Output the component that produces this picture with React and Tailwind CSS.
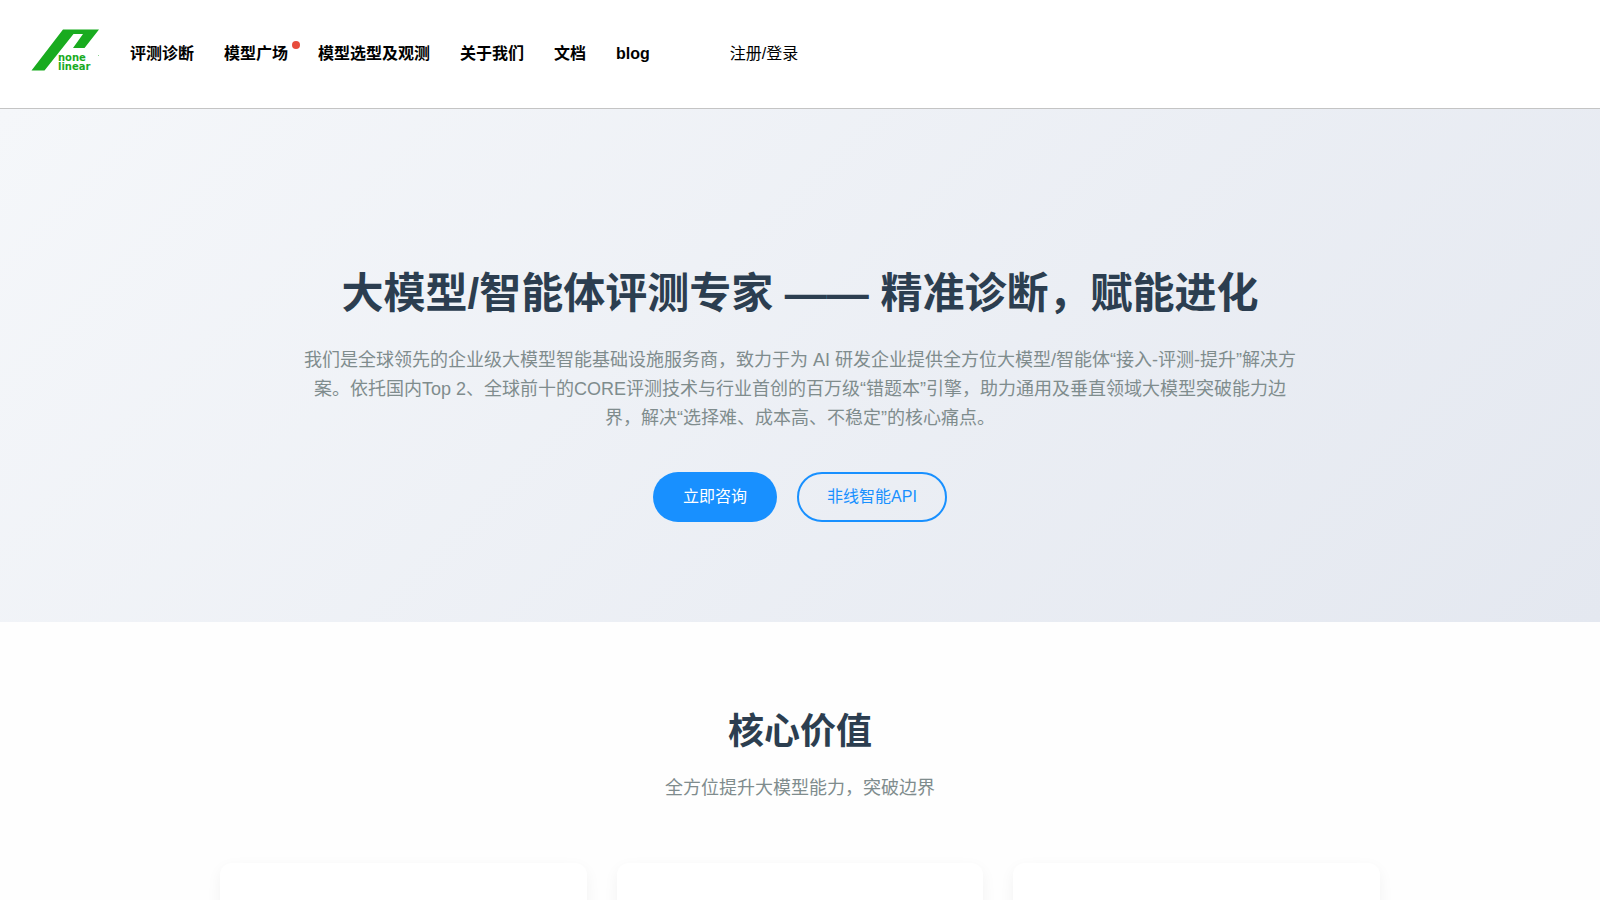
const navItems = [
  { label: '评测诊断' },
  { label: '模型广场', hot: true },
  { label: '模型选型及观测' },
  { label: '关于我们' },
  { label: '文档' },
  { label: 'blog' },
];

function Logo() {
  return (
    <svg className="h-[60px] w-[70px]" viewBox="0 0 70 60" role="img" aria-label="none linear">
      <path d="M33 9.5H69L54.5 28H43L53 14H43.5L14.5 50.5H1.5Z" fill="#19ab1f" />
      <g fill="#19ab1f" fontFamily="'DejaVu Sans', sans-serif" fontWeight="bold">
        <text x="28" y="41" fontSize="10">none</text>
        <text x="28" y="50" fontSize="10">linear</text>
      </g>
      <rect x="68" y="35" width="1" height="1" fill="#8fd492" />
    </svg>
  );
}

function Header() {
  return (
    <header className="flex h-[109px] items-center border-b border-[#c4c4c4] bg-white px-[30px] pb-2">
      <a href="#home" className="shrink-0">
        <Logo />
      </a>
      <nav className="mt-2 ml-[30px] flex items-center gap-[30px] whitespace-nowrap">
        {navItems.map((item) => (
          <a key={item.label} href="#nav" className="relative font-bold text-black">
            {item.label}
            {item.hot && (
              <span className="absolute -top-px -right-3 size-2 rounded-full bg-[#e74c3c]" />
            )}
          </a>
        ))}
      </nav>
      <a href="#login" className="mt-2 ml-20 whitespace-nowrap text-black">
        注册/登录
      </a>
    </header>
  );
}

function Hero() {
  return (
    <section className="bg-linear-[135deg,#f5f7fa,#e4e8f0] px-5 pt-[150px] pb-[100px] text-center">
      <h1 className="mb-[18px] text-[42px] leading-[69px] font-bold text-[#2c3e50]">
        大模型/智能体评测专家 —— 精准诊断，赋能进化
      </h1>
      <p className="mx-auto mb-[39px] max-w-[1000px] text-lg leading-[29px] text-[#7f8c8d]">
        我们是全球领先的企业级大模型智能基础设施服务商，致力于为 AI
        研发企业提供全方位大模型/智能体“接入-评测-提升”解决方案。依托国内Top
        2、全球前十的CORE评测技术与行业首创的百万级“错题本”引擎，助力通用及垂直领域大模型突破能力边界，解决“选择难、成本高、不稳定”的核心痛点。
      </p>
      <div className="flex justify-center gap-5">
        <button
          type="button"
          className="h-[50px] rounded-full bg-[#1890ff] px-[30px] text-white"
        >
          立即咨询
        </button>
        <button
          type="button"
          className="h-[50px] rounded-full border-2 border-[#1890ff] px-7 text-[#1890ff]"
        >
          非线智能API
        </button>
      </div>
    </section>
  );
}

function CoreValues() {
  return (
    <section className="mx-auto max-w-[1200px] px-5 py-20">
      <h2 className="mb-3 text-center text-4xl leading-[60px] font-bold text-[#2c3e50]">
        核心价值
      </h2>
      <p className="mb-[60px] text-center text-lg leading-[29px] text-[#7f8c8d]">
        全方位提升大模型能力，突破边界
      </p>
      <div className="grid grid-cols-3 gap-[30px]">
        {[0, 1, 2].map((i) => (
          <article
            key={i}
            className="h-80 rounded-xl bg-white shadow-[0_5px_15px_rgba(0,0,0,0.05)]"
          />
        ))}
      </div>
    </section>
  );
}

export default function App() {
  return (
    <div className="min-h-screen bg-[#fefefe] font-['Liberation_Sans','Noto_Sans_CJK_SC',sans-serif] text-base">
      <Header />
      <main>
        <Hero />
        <CoreValues />
      </main>
    </div>
  );
}
